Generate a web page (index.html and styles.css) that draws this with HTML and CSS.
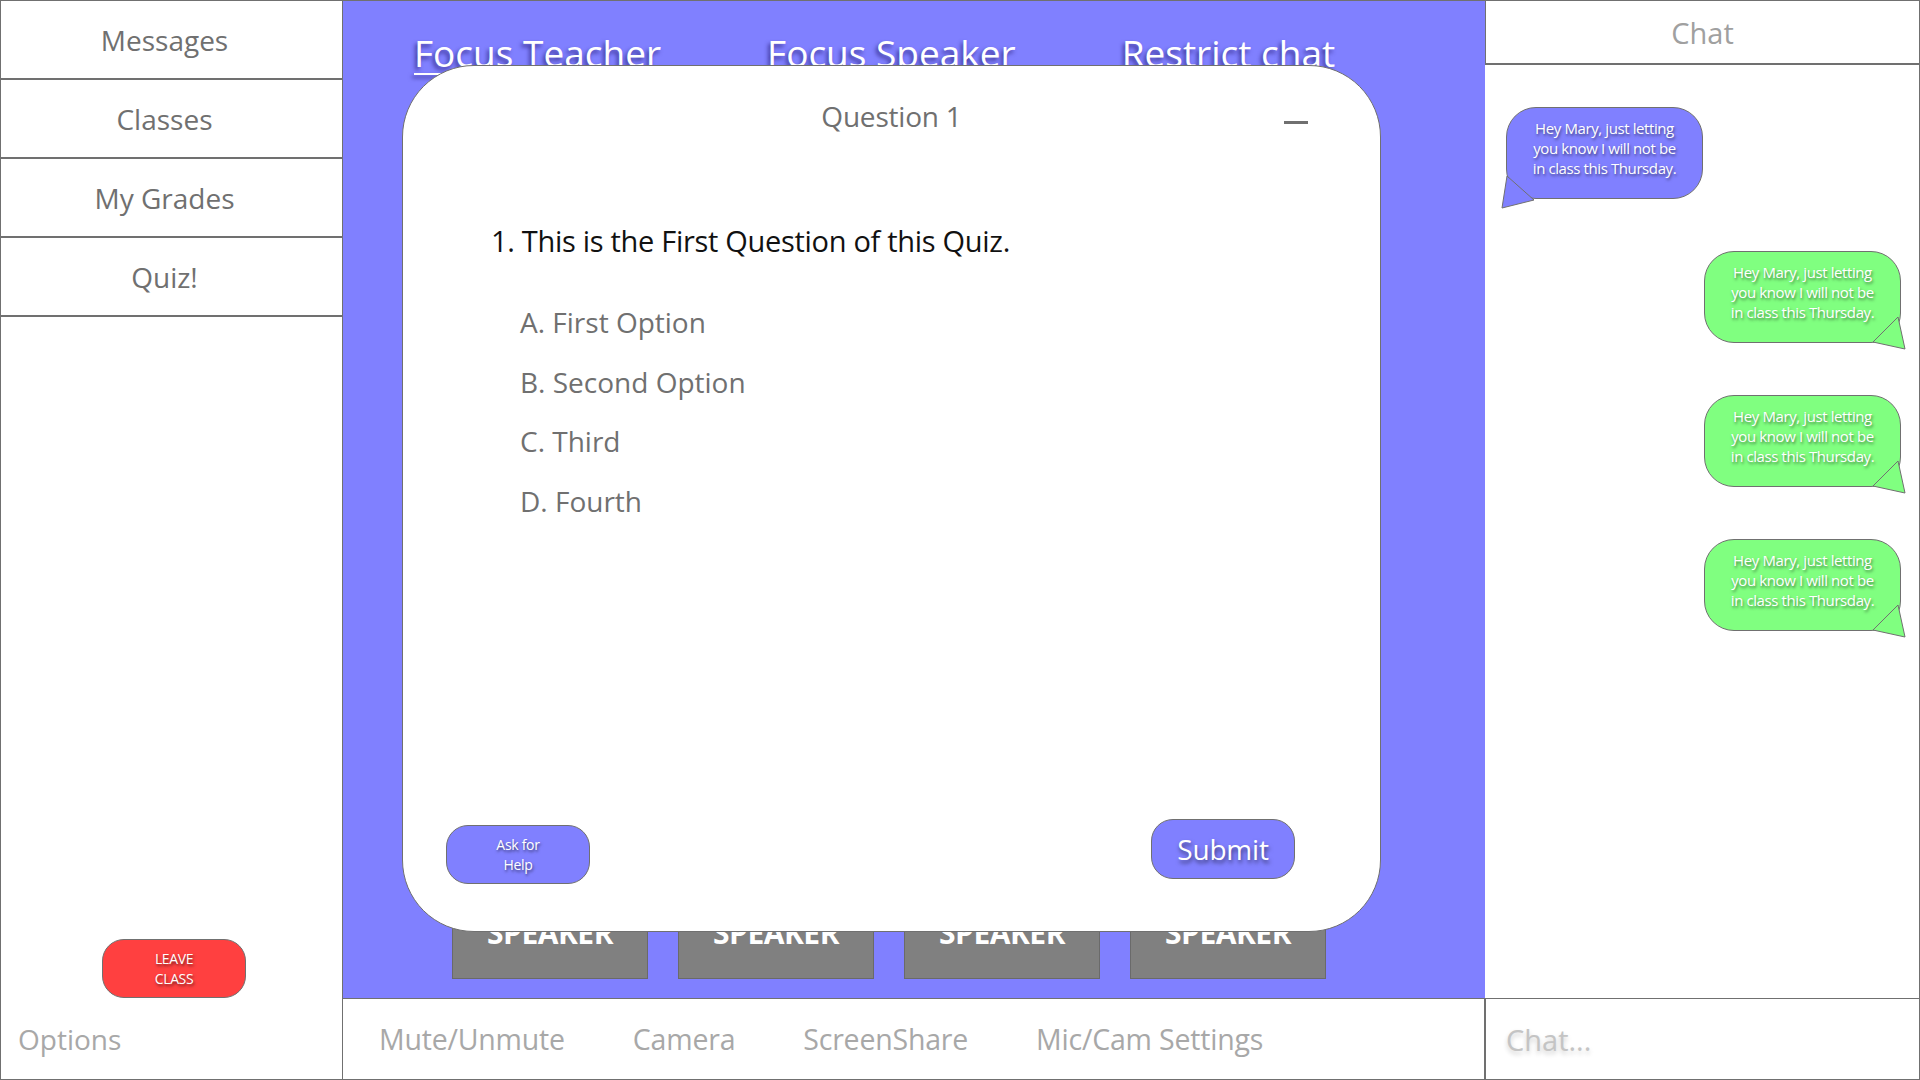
FILE: index.html
```html
<!DOCTYPE html>
<html lang="en">
<head>
<meta charset="utf-8">
<title>Classroom - Quiz</title>
<link rel="stylesheet" href="styles.css">
</head>
<body>
<div class="app">
  <aside class="sidebar">
    <nav class="menu">
      <div class="menu-item">Messages</div>
      <div class="menu-item">Classes</div>
      <div class="menu-item">My Grades</div>
      <div class="menu-item">Quiz!</div>
    </nav>
    <div class="sidebar-spacer"></div>
    <div class="leave-wrap"><button class="leave">LEAVE<br>CLASS</button></div>
    <div class="options">Options</div>
  </aside>

  <main class="main">
    <section class="stage">
      <div class="stage-nav">
        <span class="nav-link active">Focus Teacher</span>
        <span class="nav-link">Focus Speaker</span>
        <span class="nav-link">Restrict chat</span>
      </div>
      <div class="tiles">
        <div class="tile">SPEAKER</div>
        <div class="tile">SPEAKER</div>
        <div class="tile">SPEAKER</div>
        <div class="tile">SPEAKER</div>
      </div>

      <div class="modal">
        <div class="modal-title">Question 1</div>
        <span class="minimize"></span>
        <div class="question">1. This is the First Question of this Quiz.</div>
        <ul class="answers">
          <li>A. First Option</li>
          <li>B. Second Option</li>
          <li>C. Third</li>
          <li>D. Fourth</li>
        </ul>
        <div class="modal-spacer"></div>
        <div class="modal-footer">
          <button class="btn-help">Ask for<br>Help</button>
          <button class="btn-submit">Submit</button>
        </div>
      </div>
    </section>
    <div class="toolbar">
      <span class="tool">Mute/Unmute</span>
      <span class="tool">Camera</span>
      <span class="tool">ScreenShare</span>
      <span class="tool">Mic/Cam Settings</span>
    </div>
  </main>

  <aside class="chat">
    <div class="chat-header">Chat</div>
    <div class="chat-body">
      <div class="bubble incoming">Hey Mary, just letting<br>you know I will not be<br>in class this Thursday.
        <svg class="tail tail-left" width="36" height="36" viewBox="0 0 36 36"><polygon points="6,2 33,26 1,34" /></svg>
      </div>
      <div class="bubble outgoing">Hey Mary, just letting<br>you know I will not be<br>in class this Thursday.
        <svg class="tail tail-right" width="36" height="36" viewBox="0 0 36 36"><polygon points="28,3 3,28 35,35" /></svg>
      </div>
      <div class="bubble outgoing">Hey Mary, just letting<br>you know I will not be<br>in class this Thursday.
        <svg class="tail tail-right" width="36" height="36" viewBox="0 0 36 36"><polygon points="28,3 3,28 35,35" /></svg>
      </div>
      <div class="bubble outgoing">Hey Mary, just letting<br>you know I will not be<br>in class this Thursday.
        <svg class="tail tail-right" width="36" height="36" viewBox="0 0 36 36"><polygon points="28,3 3,28 35,35" /></svg>
      </div>
    </div>
    <div class="chat-input">Chat...</div>
  </aside>
</div>
</body>
</html>
```

FILE: styles.css
```css
* { box-sizing: border-box; }

html, body {
  margin: 0;
  padding: 0;
  background: #ffffff;
}

body {
  font-family: "Open Sans", "Noto Sans", sans-serif;
  color: #707070;
}

.app {
  display: grid;
  grid-template-columns: 343px 1142px 435px;
  width: 1920px;
  height: 1080px;
  overflow: hidden;
}

/* ---------- Sidebar ---------- */
.sidebar {
  display: flex;
  flex-direction: column;
  border-left: 1px solid #707070;
  border-right: 1px solid #707070;
  border-bottom: 1px solid #707070;
}

.menu {
  display: flex;
  flex-direction: column;
  border-top: 1px solid #707070;
}

.menu-item {
  height: 79px;
  display: flex;
  align-items: center;
  justify-content: center;
  padding-right: 14px;
  border-bottom: 2px solid #707070;
  font-size: 28px;
  color: #707070;
}

.sidebar-spacer { flex: 1; }

.leave-wrap {
  padding-left: 101px;
}

.leave {
  width: 144px;
  height: 59px;
  border: 1px solid #707070;
  border-radius: 22px;
  background: #ff4040;
  color: #ffffff;
  font-family: "Open Sans", sans-serif;
  font-size: 14px;
  line-height: 20px;
  letter-spacing: -0.4px;
  text-shadow: 1px 2px 3px rgba(0, 0, 0, 0.55);
  padding: 0;
}

.options {
  height: 81px;
  display: flex;
  align-items: center;
  padding-left: 17px;
  font-size: 28px;
  color: #a8a8a8;
}

/* ---------- Main stage ---------- */
.main {
  display: flex;
  flex-direction: column;
}

.stage {
  position: relative;
  flex: 0 0 998px;
  background: #8080ff;
  border-top: 1px solid #707070;
  display: flex;
  flex-direction: column;
}

.stage-nav {
  display: flex;
  gap: 106px;
  padding-left: 71px;
  padding-top: 29px;
}

.nav-link {
  font-size: 37px;
  line-height: 46px;
  color: #ffffff;
  letter-spacing: 0;
  text-shadow: -2px 3px 4px rgba(40, 30, 120, 0.8);
}

.nav-link.active {
  text-decoration: underline;
  text-decoration-thickness: 2px;
  text-underline-offset: 6px;
}

.tiles {
  margin-top: auto;
  display: flex;
  gap: 30px;
  padding-left: 109px;
  padding-bottom: 19px;
}

.tile {
  width: 196px;
  height: 110px;
  background: #808080;
  border: 1px solid #6a6a6a;
  color: #ffffff;
  font-weight: 700;
  font-size: 30px;
  line-height: 34px;
  text-align: center;
  padding-top: 46px;
  letter-spacing: -0.5px;
}

/* ---------- Quiz modal (overlay) ---------- */
.modal {
  position: absolute;
  left: 59px;
  top: 64px;
  width: 979px;
  height: 867px;
  background: #ffffff;
  border: 1px solid #707070;
  border-radius: 72px;
  display: flex;
  flex-direction: column;
  padding-top: 30px;
}

.modal-title {
  text-align: center;
  font-size: 28px;
  line-height: 40px;
  color: #707070;
  letter-spacing: -0.2px;
}

.minimize {
  position: absolute;
  top: 55px;
  right: 72px;
  width: 24px;
  height: 3px;
  background: #707070;
}

.question {
  margin-top: 85px;
  padding-left: 88px;
  font-size: 29px;
  line-height: 40px;
  color: #111111;
  letter-spacing: -0.3px;
}

.answers {
  list-style: none;
  margin: 32px 0 0 0;
  padding: 0 0 0 117px;
}

.answers li {
  font-size: 28px;
  line-height: 59.5px;
  color: #707070;
  letter-spacing: 0;
}

.modal-spacer { flex: 1; }

.modal-footer {
  display: flex;
  justify-content: space-between;
  align-items: flex-end;
  padding: 0 85px 47px 43px;
}

.btn-help {
  width: 144px;
  height: 59px;
  border: 1px solid #707070;
  border-radius: 22px;
  background: #8080ff;
  color: #ffffff;
  font-family: "Open Sans", sans-serif;
  font-size: 14px;
  line-height: 20px;
  letter-spacing: -0.3px;
  text-shadow: 1px 2px 3px rgba(0, 0, 0, 0.55);
  padding: 0;
}

.btn-submit {
  width: 144px;
  height: 60px;
  margin-bottom: 5px;
  border: 1px solid #707070;
  border-radius: 22px;
  background: #8080ff;
  color: #ffffff;
  font-family: "Open Sans", sans-serif;
  font-size: 28px;
  letter-spacing: -0.2px;
  text-shadow: 1px 3px 4px rgba(0, 0, 0, 0.55);
  padding: 0;
}

/* ---------- Toolbar ---------- */
.toolbar {
  flex: 1;
  display: flex;
  align-items: center;
  gap: 68px;
  padding-left: 36px;
  border-top: 1px solid #707070;
  border-bottom: 1px solid #707070;
  border-right: 1px solid #707070;
}

.tool {
  font-size: 28.5px;
  color: #a8a8a8;
  letter-spacing: -0.2px;
}

/* ---------- Chat panel ---------- */
.chat {
  display: flex;
  flex-direction: column;
  border-right: 1px solid #707070;
}

.chat-header {
  height: 65px;
  display: flex;
  align-items: center;
  justify-content: center;
  border-top: 1px solid #707070;
  border-bottom: 2px solid #707070;
  border-left: 1px solid #707070;
  font-size: 29px;
  color: #a0a0a0;
}

.chat-body {
  flex: 1;
  display: flex;
  flex-direction: column;
  gap: 52px;
  padding: 42px 18px 0 20px;
  border-left: 1px solid #ffffff;
}

.bubble {
  position: relative;
  width: 197px;
  height: 92px;
  border: 1px solid #707070;
  border-radius: 30px;
  padding-top: 10px;
  text-align: center;
  font-size: 15px;
  line-height: 20px;
  letter-spacing: -0.4px;
  color: #ffffff;
  text-shadow: 1px 2px 3px rgba(0, 0, 0, 0.5);
}

.bubble.incoming { background: #8080ff; align-self: flex-start; }
.bubble.outgoing { background: #80ff80; align-self: flex-end; }

.tail {
  position: absolute;
  overflow: visible;
}

.tail polygon {
  stroke: #707070;
  stroke-width: 1;
  stroke-linejoin: miter;
}

.tail-left { left: -6px; top: 66px; }
.tail-left polygon { fill: #8080ff; }

.tail-right { right: -6px; bottom: -8px; }
.tail-right polygon { fill: #80ff80; }

.chat-input {
  height: 82px;
  display: flex;
  align-items: center;
  padding-left: 20px;
  border: 1px solid #707070;
  border-right: none;
  font-size: 29px;
  color: #c4c4c4;
  text-shadow: 0 3px 5px rgba(0, 0, 0, 0.2);
}
```
